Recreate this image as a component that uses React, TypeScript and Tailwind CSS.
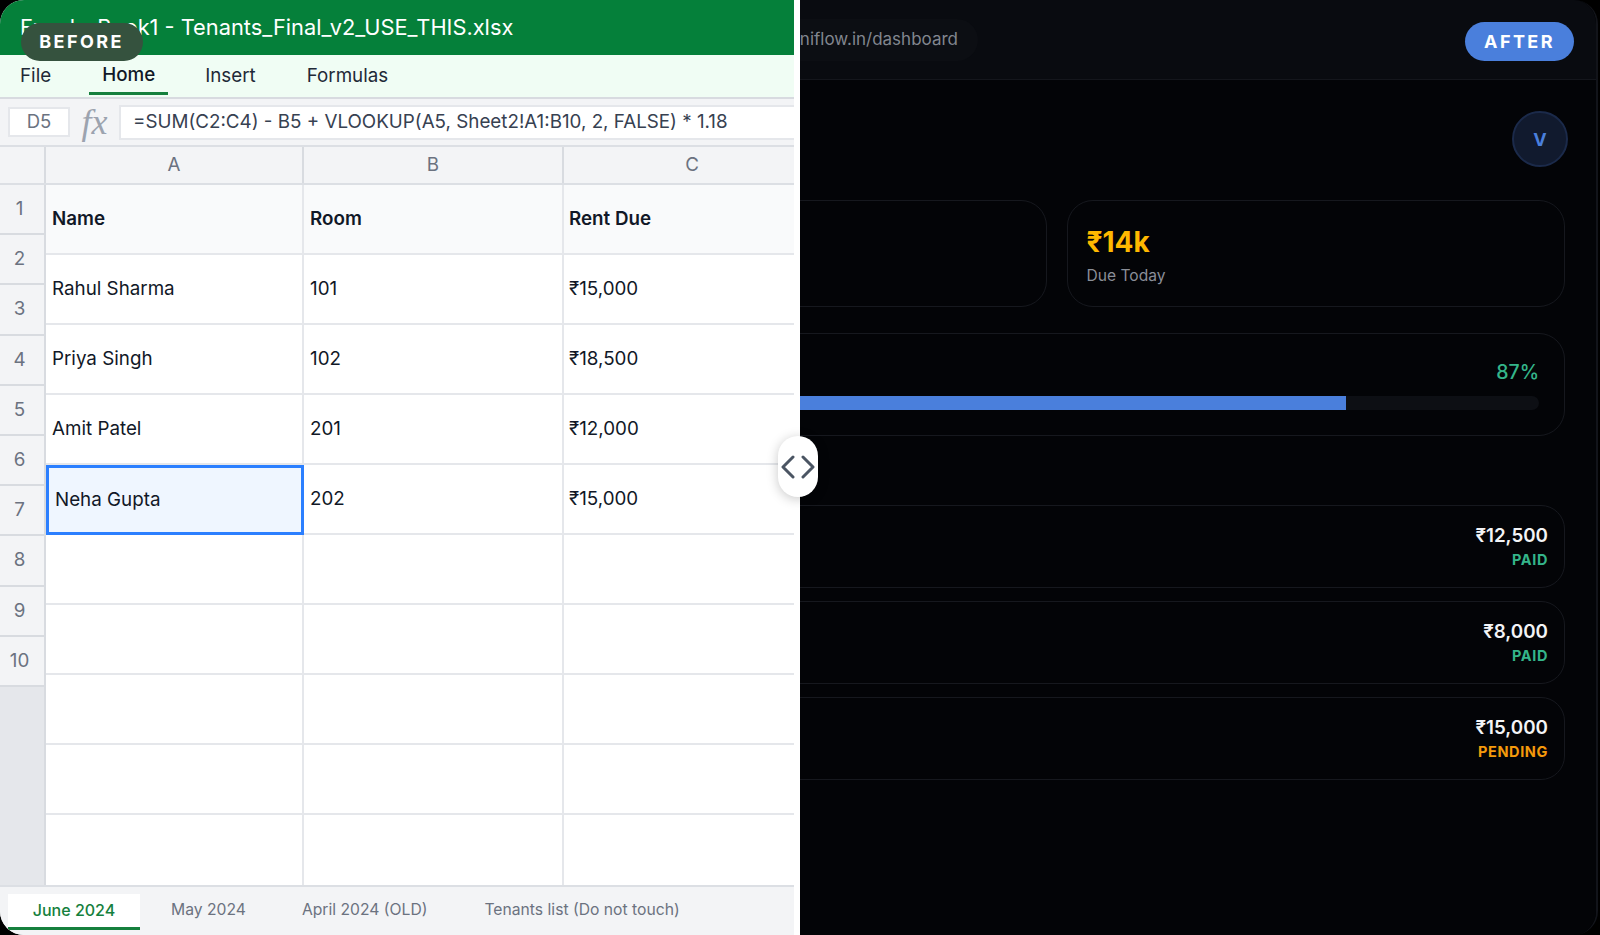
import React from "react";

const rows: [string, string, string][] = [
  ["Rahul Sharma", "101", "₹15,000"],
  ["Priya Singh", "102", "₹18,500"],
  ["Amit Patel", "201", "₹12,000"],
  ["Neha Gupta", "202", "₹15,000"],
];
const rowNumbers = [1, 2, 3, 4, 5, 6, 7, 8, 9, 10];
const payments: [string, string, string][] = [
  ["₹12,500", "PAID", "text-[#34b58a]"],
  ["₹8,000", "PAID", "text-[#34b58a]"],
  ["₹15,000", "PENDING", "text-[#f59a0b]"],
];

function Sheet() {
  return (
    <div className="w-[748px] shrink-0 grid grid-cols-[258px_260px_230px] grid-rows-[repeat(10,70px)] text-[18.8px] text-[#111827]">
      {["Name", "Room", "Rent Due"].map((h, i) => (
        <div key={h} className={`flex items-center bg-[#f9fafb] font-semibold border-b-2 border-[#e5e7eb] ${i < 2 ? "border-r-2 pl-[6px]" : "pl-[5px]"}`}>
          {h}
        </div>
      ))}
      {rows.map((r, ri) =>
        r.map((c, ci) => {
          const selected = ri === 3 && ci === 0;
          return (
            <div
              key={ri + "-" + ci}
              className={
                selected
                  ? "flex items-center pl-[6px] bg-[#eff6ff] border-[3px] border-[#2b7fff]"
                  : `flex items-center border-b-2 border-[#e5e7eb] ${ci < 2 ? "border-r-2 pl-[6px]" : "pl-[5px]"}`
              }
            >
              {c}
            </div>
          );
        })
      )}
      {Array.from({ length: 15 }).map((_, i) => (
        <div key={i} className={`${i < 12 ? "border-b-2" : ""} border-[#e5e7eb] ${i % 3 < 2 ? "border-r-2" : ""}`} />
      ))}
    </div>
  );
}

function Before() {
  return (
    <div className="absolute left-0 top-0 bottom-0 w-[800px] bg-white z-10">
      <div className="w-[794px] h-full flex flex-col overflow-hidden">
        <div className="h-[55px] shrink-0 bg-[#05803a] flex items-center pl-[20px] text-[21.8px] text-white whitespace-nowrap">
          Excel - Book1 - Tenants_Final_v2_USE_THIS.xlsx
        </div>
        <div className="h-[44px] shrink-0 bg-[#f0fdf4] border-b-2 border-[#d8dbe0] flex items-center pl-[20px] text-[18.8px] text-[#1f2937]">
          <span>File</span>
          <span className="ml-[38px] relative font-medium text-[#111827] -mt-[2px] px-[13px]">
            Home
            <span className="absolute left-0 right-0 -bottom-[6px] h-[3px] bg-[#15803d]" />
          </span>
          <span className="ml-[37px]">Insert</span>
          <span className="ml-[51px]">Formulas</span>
        </div>
        <div className="h-[46px] shrink-0 bg-[#f3f4f6] flex items-center pl-[8px]">
          <div className="w-[62px] h-[30px] bg-white border-2 border-[#e5e7eb] flex items-center justify-center text-[18.5px] text-[#6b7280]">
            D5
          </div>
          <div className="w-[49px] text-center text-[36px] italic text-[#9ca3af] [font-family:'Liberation_Serif',serif] leading-none">fx</div>
          <div className="flex-1 h-[35px] bg-white border-y-2 border-l-2 border-[#e5e7eb] flex items-center pl-[12px] text-[18.8px] text-[#374151] whitespace-nowrap">
            =SUM(C2:C4) - B5 + VLOOKUP(A5, Sheet2!A1:B10, 2, FALSE) * 1.18
          </div>
        </div>
        <div className="h-[40px] shrink-0 bg-[#f3f4f6] border-y-2 border-[#dcdfe4] flex text-[18.8px] text-[#6b7280]">
          <div className="w-[46px] shrink-0 border-r-2 border-[#d8dbe0]" />
          <div className="w-[258px] shrink-0 border-r-2 border-[#d8dbe0] flex items-center justify-center">A</div>
          <div className="w-[260px] shrink-0 border-r-2 border-[#d8dbe0] flex items-center justify-center">B</div>
          <div className="w-[256px] shrink-0 flex items-center justify-center">C</div>
        </div>
        <div className="flex-1 flex min-h-0">
          <div className="w-[46px] shrink-0 bg-[#e5e7eb] border-r-2 border-[#d8dbe0] self-stretch">
            {rowNumbers.map((n) => (
              <div key={n} className="h-[50.2px] bg-[#f3f4f6] border-b-2 border-[#d8dbe0] flex items-center justify-center pr-[5px] text-[18.8px] text-[#6b7280]">
                {n}
              </div>
            ))}
          </div>
          <Sheet />
        </div>
        <div className="h-[50px] shrink-0 bg-[#f3f4f6] border-t-2 border-[#dcdfe4] flex items-start text-[15.7px] text-[#6b7280] whitespace-nowrap">
          <div className="ml-[8px] mt-[7px] w-[132px] h-[36px] pb-[2px] bg-white border-b-[3px] border-[#15803d] flex items-center justify-center text-[16px] font-medium text-[#15803d]">
            June 2024
          </div>
          <div className="ml-[31px] mt-[6px] h-[34px] flex items-center">May 2024</div>
          <div className="ml-[56px] mt-[6px] h-[34px] flex items-center">April 2024 (OLD)</div>
          <div className="ml-[57px] mt-[6px] h-[34px] flex items-center">Tenants list (Do not touch)</div>
        </div>
      </div>
      <div className="absolute left-[778px] top-[436px] w-[40px] h-[61px] rounded-full bg-white shadow-[0_2px_12px_rgba(0,0,0,0.22)] flex items-center justify-center">
        <svg width="36" height="24" viewBox="0 0 36 24" fill="none" stroke="#4b5563" strokeWidth="3" strokeLinecap="round" strokeLinejoin="round">
          <path d="M13 2 3 12l10 10" />
          <path d="M23 2l10 10-10 10" />
        </svg>
      </div>
      <div className="absolute left-[21px] top-[23px] w-[122px] h-[38px] pb-[1px] pr-[1px] rounded-full bg-[#35523e] flex items-center justify-center text-white text-[18px] font-bold tracking-[2.4px]">
        BEFORE
      </div>
    </div>
  );
}

function After() {
  return (
    <div className="h-full bg-[#030407] flex flex-col">
      <div className="h-[80px] shrink-0 bg-[#090b10] border-b border-[#14161c] flex items-center pl-[560px] pr-[22px]">
        <div className="w-[418px] h-[42px] rounded-full bg-[#0c0e13] flex items-center justify-end pr-[20px] text-[17px] text-[#82868f]">
          uniflow.in/dashboard
        </div>
        <div className="ml-auto w-[109px] h-[39px] mt-[3px] rounded-full bg-[#4a7fdc] flex items-center justify-center text-white text-[18px] font-bold tracking-[2.4px]">
          AFTER
        </div>
      </div>
      <div className="pl-[548px] pr-[31px] flex flex-col">
        <div className="flex justify-end mt-[31px] -mr-[3px]">
          <div className="w-[56px] h-[56px] rounded-full bg-[#111a2e] border-2 border-[#1b2a4a] flex items-center justify-center text-[18px] font-bold text-[#4a7fdc]">
            V
          </div>
        </div>
        <div className="grid grid-cols-2 gap-[20px] mt-[33px]">
          <div className="h-[107px] rounded-[26px] border border-[#16181e]" />
          <div className="h-[107px] rounded-[26px] border border-[#16181e] pl-[19px] pt-[23px]">
            <div className="text-[28px] leading-[36px] font-bold text-[#ffb800]">₹14k</div>
            <div className="text-[15.6px] leading-[24px] mt-[4px] text-[#8a8e97]">Due Today</div>
          </div>
        </div>
        <div className="h-[103px] mt-[26px] rounded-[26px] border border-[#16181e] px-[25px] pt-[24px]">
          <div className="text-right text-[19.5px] leading-[28px] font-medium text-[#34b58a]">87%</div>
          <div className="h-[14px] mt-[10px] rounded-full bg-[#0d0f14]">
            <div className="w-[772px] h-full rounded-l-full bg-[#4a7fdc]" />
          </div>
        </div>
        <div className="mt-[69px] flex flex-col gap-[13px]">
          {payments.map(([amount, status, color], i) => (
            <div key={i} className="h-[83px] rounded-[24px] border border-[#16181e] flex flex-col items-end justify-center pr-[16px] pb-[1px]">
              <div className="text-[18.8px] leading-[28px] font-semibold text-[#f3f4f6]">{amount}</div>
              <div className={`text-[14.5px] leading-[20px] font-bold tracking-[0.6px] ${color}`}>{status}</div>
            </div>
          ))}
        </div>
      </div>
    </div>
  );
}

export default function App() {
  return (
    <div className="w-[1600px] h-[935px] bg-black [font-family:Inter,sans-serif]">
      <div className="relative w-[1598px] h-[935px] rounded-[24px] overflow-hidden border-r-2 border-[#12141a]">
        <After />
        <Before />
      </div>
    </div>
  );
}
